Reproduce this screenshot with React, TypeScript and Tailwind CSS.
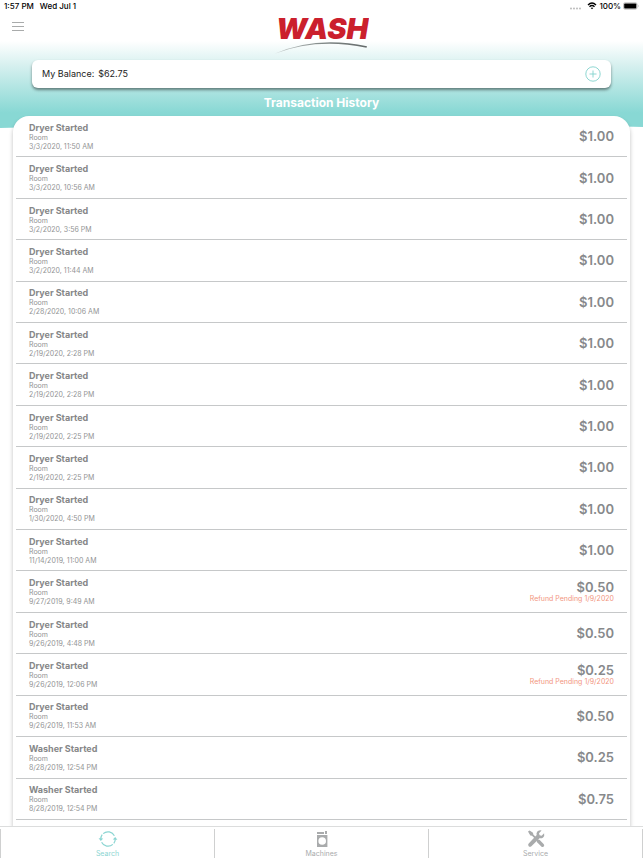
import React, { useState } from 'react';

interface Transaction {
  title: string;
  room: string;
  date: string;
  amount: string;
  refund?: string;
}

const transactions: Transaction[] = [
  { title: 'Dryer Started', room: 'Room', date: '3/3/2020, 11:50 AM', amount: '$1.00' },
  { title: 'Dryer Started', room: 'Room', date: '3/3/2020, 10:56 AM', amount: '$1.00' },
  { title: 'Dryer Started', room: 'Room', date: '3/2/2020, 3:56 PM', amount: '$1.00' },
  { title: 'Dryer Started', room: 'Room', date: '3/2/2020, 11:44 AM', amount: '$1.00' },
  { title: 'Dryer Started', room: 'Room', date: '2/28/2020, 10:06 AM', amount: '$1.00' },
  { title: 'Dryer Started', room: 'Room', date: '2/19/2020, 2:28 PM', amount: '$1.00' },
  { title: 'Dryer Started', room: 'Room', date: '2/19/2020, 2:28 PM', amount: '$1.00' },
  { title: 'Dryer Started', room: 'Room', date: '2/19/2020, 2:25 PM', amount: '$1.00' },
  { title: 'Dryer Started', room: 'Room', date: '2/19/2020, 2:25 PM', amount: '$1.00' },
  { title: 'Dryer Started', room: 'Room', date: '1/30/2020, 4:50 PM', amount: '$1.00' },
  { title: 'Dryer Started', room: 'Room', date: '11/14/2019, 11:00 AM', amount: '$1.00' },
  { title: 'Dryer Started', room: 'Room', date: '9/27/2019, 9:49 AM', amount: '$0.50', refund: 'Refund Pending 1/9/2020' },
  { title: 'Dryer Started', room: 'Room', date: '9/26/2019, 4:48 PM', amount: '$0.50' },
  { title: 'Dryer Started', room: 'Room', date: '9/26/2019, 12:06 PM', amount: '$0.25', refund: 'Refund Pending 1/9/2020' },
  { title: 'Dryer Started', room: 'Room', date: '9/26/2019, 11:53 AM', amount: '$0.50' },
  { title: 'Washer Started', room: 'Room', date: '8/28/2019, 12:54 PM', amount: '$0.25' },
  { title: 'Washer Started', room: 'Room', date: '8/28/2019, 12:54 PM', amount: '$0.75' },
];

const SearchIcon = () => (
  <svg className="size-5" viewBox="0 0 20 20" fill="none" stroke="currentColor" strokeWidth="1.200">
    <path d="M5.200 4.600A7.200 7.200 0 0 1 16.400 6.800" />
    <path d="M14.800 15.400A7.200 7.200 0 0 1 3.600 13.200" />
    <path d="M4.200 5.700A7.200 7.200 0 0 0 2.800 11" />
    <path d="M15.800 14.300A7.200 7.200 0 0 0 17.200 9" />
    <path d="M0.600 9.200 2.800 12 5.200 9.600zM14.800 10.400 17.200 8 19.400 10.800z" fill="currentColor" stroke="none" />
  </svg>
);

const MachinesIcon = () => (
  <svg className="size-5" viewBox="0 0 20 20" fill="currentColor">
    <path d="M5 3h7v2H5zM13 2h2v3h-2z" />
    <path fillRule="evenodd" d="M5 6h10.400v12H5zM10.200 8.200a3.800 3.800 0 1 0 0 7.600 3.800 3.800 0 0 0 0-7.600z" />
  </svg>
);

const ServiceIcon = () => (
  <svg className="size-5" viewBox="0 0 20 20" fill="currentColor">
    <path d="M2 2.600 3.600 1.500 7 3.800 7.300 5.500 10.300 8.500 9 9.800 6 6.800 4.300 6.500z" />
    <path d="M11.300 10.600q1.400-.5 2.400.5l3.900 4q1.200 1.300.1 2.400t-2.400-.1l-4-3.900q-1-1-.5-2.400z" />
    <path d="M15.600 1.500q-3-.8-4.500 1.300-1 1.600-.4 3.300L2.700 14.500q-1.200 1.400 0 2.700t2.700 0l8.100-8q2 .5 3.600-.8 1.700-1.600 1-4.100l-2.500 2.400-2-.5-.6-2z" />
  </svg>
);

const WashLogo = () => (
  <svg className="h-11 w-24" viewBox="0 0 96 44" role="img" aria-label="WASH">
    <defs>
      <linearGradient id="swoosh" x1="0" y1="0" x2="1" y2="0">
        <stop offset="0" stopColor="#c4caca" />
        <stop offset="0.500" stopColor="#838b8a" />
        <stop offset="1" stopColor="#646a6a" />
      </linearGradient>
    </defs>
    <text x="3" y="27" fontFamily="Inter, sans-serif" fontSize="29" fontWeight="900" fontStyle="italic" fill="#cb202d">
      WASH
    </text>
    <path d="M1.500 41.800Q43 23.500 94 34.200L93.500 35.800Q44 25.500 1.500 41.800z" fill="url(#swoosh)" />
  </svg>
);

const StatusBar = () => (
  <div className="flex h-3 items-center justify-between px-1 text-[8px] font-medium text-black">
    <div className="flex gap-1.5">
      <span>1:57 PM</span>
      <span>Wed Jul 1</span>
    </div>
    <div className="flex items-center gap-0.5">
      <svg className="h-2 w-4" viewBox="0 0 16 8" fill="#b5b5b5">
        <circle cx="2" cy="6.500" r="0.900" />
        <circle cx="5" cy="6.500" r="0.900" />
        <circle cx="8" cy="6.500" r="0.900" />
        <circle cx="11" cy="6.500" r="0.900" />
      </svg>
      <svg className="h-2 w-2.5" viewBox="0 0 9 8" fill="none" stroke="currentColor" strokeWidth="1.400">
        <path d="M0.500 3Q4.500-1 8.500 3M2 4.800Q4.500 2.400 7 4.800" />
        <path d="M4.500 7.200 3.200 5.900Q4.500 5 5.800 5.900z" fill="currentColor" stroke="none" />
      </svg>
      <span>100%</span>
      <svg className="h-2 w-4" viewBox="0 0 16 8">
        <rect x="0.500" y="0.800" width="13.500" height="6.400" rx="1.500" fill="none" stroke="#999" strokeWidth="0.600" />
        <rect x="1.200" y="1.500" width="12.100" height="5" rx="0.800" />
        <path d="M15 2.800q1 1.200 0 2.400z" fill="#999" />
      </svg>
    </div>
  </div>
);

const TransactionRow = ({ transaction }: { transaction: Transaction }) => {
  return (
    <li className="flex flex-1 items-center justify-between border-b border-[#c6c8c9] px-[13px]">
      <div className="pt-px text-[7px] leading-[9px] text-[#929394]">
        <p className="text-[9px] font-bold leading-[10px] text-[#868788]">{transaction.title}</p>
        <p>{transaction.room}</p>
        <p>{transaction.date}</p>
      </div>
      <div className="text-right">
        <p className="text-[13px] font-semibold leading-[14px] text-[#87898b]">{transaction.amount}</p>
        {transaction.refund && <p className="text-[7px] leading-[9px] text-[#f29680]">{transaction.refund}</p>}
      </div>
    </li>
  );
};

const tabs = [
  { name: 'Search', icon: <SearchIcon /> },
  { name: 'Machines', icon: <MachinesIcon /> },
  { name: 'Service', icon: <ServiceIcon /> },
];

function App() {
  const [activeTab, setActiveTab] = useState('Search');

  return (
    <div className="relative flex min-h-screen flex-col bg-white font-['Inter',sans-serif]">
      {/* Header wave */}
      <svg className="absolute inset-x-0 top-0 h-32 w-full" viewBox="0 0 640 128" preserveAspectRatio="none">
        <defs>
          <linearGradient id="wave" x1="0" y1="0" x2="0" y2="1">
            <stop offset="0.320" stopColor="#ffffff" />
            <stop offset="0.500" stopColor="#d9f1f0" />
            <stop offset="0.880" stopColor="#88d8d4" />
            <stop offset="1" stopColor="#88d8d4" />
          </linearGradient>
        </defs>
        <path d="M0 0H640V127Q320 118 0 128z" fill="url(#wave)" />
      </svg>

      <header className="relative">
        <StatusBar />
        <div className="grid grid-cols-3 items-start px-3">
          <button type="button" aria-label="Menu" className="mt-2 w-3 text-[#a9abab]">
            <svg className="h-3 w-3" viewBox="0 0 12 12" stroke="currentColor">
              <path d="M0 2.500H12M0 6.500H12M0 10.500H12" />
            </svg>
          </button>
          <div className="flex justify-center">
            <WashLogo />
          </div>
        </div>
        <div className="mx-8 mt-1 flex h-7 items-center justify-between rounded-md bg-white px-2.5 shadow-[0_2px_3px_rgba(0,0,0,0.45)]">
          <p className="flex gap-1 text-[9px] text-[#1c1c1c]">
            <span>My Balance:</span>
            <span>$62.75</span>
          </p>
          <button type="button" aria-label="Add balance" className="text-[#82d2cd]">
            <svg className="size-4" viewBox="0 0 16 16" fill="none" stroke="currentColor" strokeWidth="0.900">
              <circle cx="8" cy="8" r="7.200" />
              <path d="M4.500 8H11.500M8 4.500V11.500" />
            </svg>
          </button>
        </div>
        <h1 className="pt-[7px] pb-[5px] text-center text-xs font-bold text-white">Transaction History</h1>
      </header>

      <main className="relative mx-[13px] flex flex-1 flex-col rounded-t-2xl bg-white px-[3px] shadow-[0_3px_4px_rgba(0,0,0,0.25)]">
        <ul className="flex flex-1 flex-col pb-1.5">
          {transactions.map((transaction, index) => (
            <TransactionRow key={index} transaction={transaction} />
          ))}
        </ul>
      </main>

      <nav className="sticky bottom-0 flex h-8 border-t border-[#dcdddd] bg-white pt-0.5">
        {tabs.map((tab) => (
          <button
            key={tab.name}
            type="button"
            onClick={() => setActiveTab(tab.name)}
            className={`flex flex-1 flex-col items-center border-l border-[#cfd0d0] text-[7px] leading-[9px] last:border-r ${
              activeTab === tab.name ? 'text-[#8bd5d2]' : 'text-[#a9abac]'
            }`}
          >
            {tab.icon}
            <span>{tab.name}</span>
          </button>
        ))}
      </nav>
    </div>
  );
}

export default App;
